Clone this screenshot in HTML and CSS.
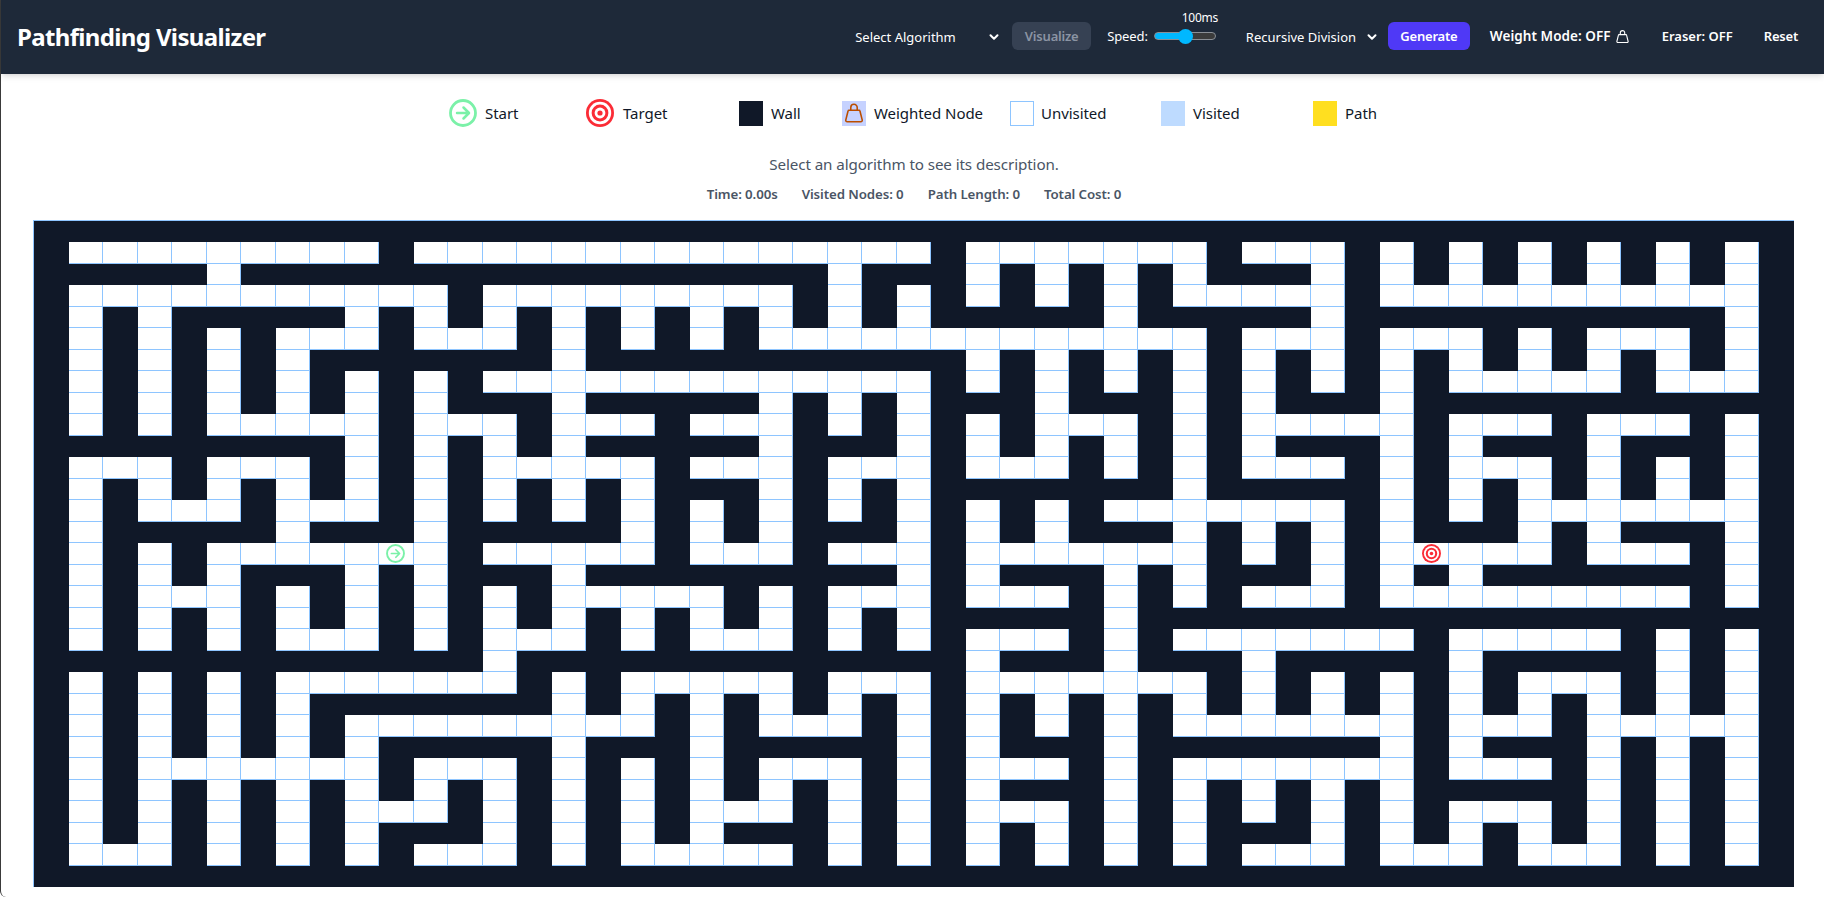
FILE: index.html
```html
<!DOCTYPE html>
<html lang="en">
<head>
<meta charset="utf-8">
<title>Pathfinding Visualizer</title>
<link rel="stylesheet" href="styles.css">
</head>
<body>
<div class="app">
  <header class="topbar">
    <h1 class="title">Pathfinding Visualizer</h1>
    <nav class="controls">
      <div class="select select-algo"><span>Select Algorithm</span>
        <svg class="chev" viewBox="0 0 12 12"><path d="M2.5 4.2 6 7.8l3.5-3.6"/></svg></div>
      <button class="btn btn-disabled">Visualize</button>
      <div class="speed">
        <span class="speed-label">Speed:</span>
        <div class="speed-slider">
          <span class="speed-value">100ms</span>
          <input class="range" type="range" min="0" max="200" value="104">
        </div>
      </div>
      <div class="select select-maze"><span>Recursive Division</span>
        <svg class="chev" viewBox="0 0 12 12"><path d="M2.5 4.2 6 7.8l3.5-3.6"/></svg></div>
      <button class="btn btn-primary">Generate</button>
      <button class="link link-weight">Weight Mode: OFF
        <svg class="weight-mini" viewBox="0 0 24 24"><path d="M8.500 9V6a3.500 3.500 0 0 1 7 0v3"/><path d="M6.500 9h11a1 1 0 0 1 1 .8l2.500 10a1.500 1.500 0 0 1-1.500 1.700h-15A1.500 1.500 0 0 1 3 19.800l2.500-10a1 1 0 0 1 1-.8z"/></svg>
      </button>
      <button class="link link-eraser">Eraser: OFF</button>
      <button class="link link-reset">Reset</button>
    </nav>
  </header>

  <main class="content">
    <ul class="legend">
      <li class="legend-item">
        <svg class="node-icon" viewBox="0 0 28 28"><circle class="start-ring" cx="14" cy="14" r="12.500"/><path class="start-arrow" d="M8 14h11.500M14.500 8.500 20 14l-5.500 5.500"/></svg>
        <span>Start</span></li>
      <li class="legend-item">
        <svg class="node-icon node-icon-target" viewBox="0 0 28 28"><circle class="t-red" cx="14" cy="14" r="14"/><circle class="t-white" cx="14" cy="14" r="11.200"/><circle class="t-red" cx="14" cy="14" r="8.400"/><circle class="t-white" cx="14" cy="14" r="5.400"/><circle class="t-red" cx="14" cy="14" r="2.600"/></svg>
        <span>Target</span></li>
      <li class="legend-item"><i class="swatch swatch-wall"></i><span>Wall</span></li>
      <li class="legend-item"><i class="swatch swatch-weight">
        <svg class="weight-icon" viewBox="0 0 24 24"><path d="M8.500 9V6a3.500 3.500 0 0 1 7 0v3"/><path d="M6.500 9h11a1 1 0 0 1 1 .8l2.500 10a1.500 1.500 0 0 1-1.500 1.700h-15A1.500 1.500 0 0 1 3 19.800l2.500-10a1 1 0 0 1 1-.8z"/></svg></i><span>Weighted Node</span></li>
      <li class="legend-item"><i class="swatch swatch-unvisited"></i><span>Unvisited</span></li>
      <li class="legend-item"><i class="swatch swatch-visited"></i><span>Visited</span></li>
      <li class="legend-item"><i class="swatch swatch-path"></i><span>Path</span></li>
    </ul>

    <p class="description">Select an algorithm to see its description.</p>

    <div class="stats">
      <span>Time: 0.00s</span>
      <span>Visited Nodes: 0</span>
      <span>Path Length: 0</span>
      <span>Total Cost: 0</span>
    </div>

    <div class="grid" id="grid"></div>
  </main>
</div>
<script src="script.js"></script>
</body>
</html>
```
FILE: styles.css
```css
* { box-sizing: border-box; }
html, body { margin: 0; height: 100%; background: #fff; overflow: hidden; }
body { font-family: "Noto Sans", "Open Sans", sans-serif; color: #101828; }
.app { height: 897px; border-left: 1px solid #3a3a3a; border-bottom-left-radius: 6px; }

.topbar {
  height: 74px; background: #1e2939; color: #fff;
  display: flex; align-items: center; justify-content: space-between;
  padding: 0 26px 2px 16px;
  box-shadow: 0 4px 6px -1px rgba(0,0,0,.1), 0 2px 4px -2px rgba(0,0,0,.1);
  position: relative;
}
.title { margin: 0; padding-top: 2px; font-size: 24px; font-weight: 700; letter-spacing: -.65px; line-height: 32px; }
.controls { display: flex; align-items: center; font-size: 13px; }

.select { display: flex; align-items: center; justify-content: space-between; color: #fff; padding-top: 2px; }
.select-algo { width: 146px; margin-right: 11px; }
.select-maze { width: 133px; margin-right: 9px; }
.chev { width: 12px; height: 12px; margin-right: 1px; fill: none; stroke: #fff; stroke-width: 2; stroke-linecap: round; stroke-linejoin: round; }

.btn { height: 28px; border: 0; border-radius: 6px; font: inherit; font-weight: 600; padding: 0; letter-spacing: -.2px; }
.btn-disabled { width: 79px; background: #364153; color: #8b94a3; margin-right: 16px; }
.btn-primary { width: 82px; background: #4f39f6; color: #fff; margin-right: 20px; }

.speed { display: flex; align-items: center; margin-right: 30px; }
.speed-label { margin-right: 6px; letter-spacing: -.1px; }
.speed-slider { position: relative; width: 62px; height: 16px; display: flex; align-items: center; }
.speed-value { position: absolute; right: -2px; top: -18px; font-size: 12px; line-height: 16px; white-space: nowrap; letter-spacing: -.3px; }
.range {
  -webkit-appearance: none; appearance: none; display: block;
  width: 62px; height: 8px; margin: 0; border-radius: 4px;
  border: 1px solid #8a8f96;
  background: linear-gradient(to right, #00b8ff 52%, #3b3b3b 52%);
}
.range::-webkit-slider-thumb {
  -webkit-appearance: none; appearance: none;
  width: 15px; height: 15px; border-radius: 50%; background: #00b8ff; border: 0;
}

.link { background: none; border: 0; padding: 0; color: #fff; font: inherit; font-weight: 600; display: flex; align-items: center; white-space: nowrap; }
.link-weight { margin-right: 32px; font-size: 13.500px; letter-spacing: .05px; }
.link-eraser { margin-right: 31px; }
.link-reset { letter-spacing: -.2px; }
.weight-mini { width: 15px; height: 15px; margin-left: 4px; fill: none; stroke: #fff; stroke-width: 1.800; }

.content { display: flex; flex-direction: column; padding: 0 29px 0 32px; }

.legend {
  list-style: none; margin: 25px 0 0; padding: 0 0 0 416px; height: 26px;
  display: grid; grid-template-columns: 137px 153px 103px 168px 151px 152px 80px;
  align-items: center; font-size: 15px; letter-spacing: -.05px;
}
.legend-item { display: flex; align-items: center; white-space: nowrap; }
.node-icon { width: 28px; height: 28px; flex: none; margin-right: 8px; }
.node-icon-target { margin-right: 9px; }
.start-ring { fill: none; stroke: #7bf1a8; stroke-width: 2.800; }
.start-arrow { fill: none; stroke: #7bf1a8; stroke-width: 2.500; stroke-linecap: round; stroke-linejoin: round; }
.t-red { fill: #fb2c36; }
.t-white { fill: #fff; }

.swatch { width: 24px; height: 25px; flex: none; margin-right: 8px; display: flex; align-items: center; justify-content: center; }
.swatch-wall { background: #101828; }
.swatch-weight { background: #c6d2ff; }
.swatch-unvisited { background: #fff; border: 1px solid #8ec5ff; margin-right: 7px; }
.swatch-visited { background: #bedbff; }
.swatch-path { background: #ffdf20; }
.weight-icon { width: 22px; height: 22px; fill: none; stroke: #bb4d00; stroke-width: 1.700; }

.description { margin: 27px 0 0; text-align: center; font-size: 15.200px; line-height: 24px; color: #4a5565; letter-spacing: -.1px; }

.stats { display: flex; justify-content: center; gap: 24px; margin-top: 8px; height: 20px; font-size: 13.300px; line-height: 20px; font-weight: 600; color: #4a5565; letter-spacing: -.1px; }

.grid {
  margin-top: 16px; width: 1761px; height: 667px;
  display: grid; grid-template-columns: repeat(51, 1fr); grid-template-rows: repeat(31, 1fr);
  border-top: 1px solid #8ec5ff; border-left: 1px solid #8ec5ff;
}
.cell { background: #fff; border-right: 1px solid #8ec5ff; border-bottom: 1px solid #8ec5ff; display: flex; align-items: center; justify-content: center; min-width: 0; min-height: 0; }
.cell.wall { background: #101828; border-color: #101828; }
.cell-icon { width: 19px; height: 19px; display: block; }
```
FILE: script.js
```js
// Open cells per row, as column ranges; everything else is a wall.
var OPEN = [
  "",
  "1-9 11-25 27-33 35-37 39 41 43 45 47 49",
  "5 23 27 29 31 33 37 39 41 43 45 47 49",
  "1-11 13-21 23 25 27 29 31 33-37 39-49",
  "1 3 9 11 13 15 17 19 21 23 25 31 37 49",
  "1 3 5 7-9 11-13 15 17 19 21-33 35-37 39-41 43 45-47 49",
  "1 3 5 7 15 27 29 31 33 35 37 39 41 43 45 47 49",
  "1 3 5 7 9 11 13-25 27 29 31 33 35 37 39 41-45 47-49",
  "1 3 5 7 9 11 15 21 23 25 29 33 35 39",
  "1 3 5-9 11-13 15-17 19-21 23 25 27 29-31 33 35-39 41-43 45-47 49",
  "9 11 13 15 21 25 27 29 31 33 35 39 41 45 49",
  "1-3 5-7 9 11 13-17 19-21 23-25 27-29 31 33 35-37 39 41-43 45 47 49",
  "1 3 5 7 9 11 13 15 17 21 23 25 33 39 41 43 45 47 49",
  "1 3-5 7-9 11 13 15 17 19 21 23 25 27 29 31-37 39 41 43-49",
  "1 7 11 17 19 21 25 27 29 33 35 37 39 43 45 49",
  "1 3 5-11 13-17 19-21 23-25 27-33 35 37 39-43 45-47 49",
  "1 3 5 9 11 15 25 27 31 33 37 39 41 49",
  "1 3-5 7 9 11 13 15-19 21 23-25 27-29 31 33 35-37 39-47 49",
  "1 3 5 7 9 11 13 15 17 19 21 23 25 31",
  "1 3 5 7-9 11 13-15 17 19-21 23 25 27-29 31 33-39 41-45 47 49",
  "13 27 31 35 41 47 49",
  "1 3 5 7-13 15 17-21 23-25 27-33 35 37 39 41 43-45 47 49",
  "1 3 5 7 15 17 19 21 23 25 27 29 31 33 35 37 39 41 43 45 47 49",
  "1 3 5 7 9-17 19 21-23 25 27 29 31 33-39 41-43 45-49",
  "1 3 5 7 9 15 19 25 27 31 39 41 45 47 49",
  "1 3-9 11-13 15 17 19 21-23 25 27-29 31 33-39 41-43 45 47 49",
  "1 3 5 7 9 11 13 15 17 19 21 23 25 27 31 33 35 37 39 45 47 49",
  "1 3 5 7 9-11 13 15 17 19-21 23 25 27-29 31 33 35 37 39 41-43 45 47 49",
  "1 3 5 7 9 13 15 17 19 23 25 27 29 31 33 37 39 41 43 45 47 49",
  "1-3 5 7 9 11-13 15 17-21 23 25 27 29 31 33 35-37 39-41 43-45 47 49",
  ""
];
var COLS = 51;
var START = "15:10", TARGET = "15:40";
var START_SVG = '<svg class="cell-icon" viewBox="0 0 28 28"><circle class="start-ring" cx="14" cy="14" r="12.500"/><path class="start-arrow" d="M8 14h11.500M14.500 8.500 20 14l-5.500 5.500"/></svg>';
var TARGET_SVG = '<svg class="cell-icon" viewBox="0 0 28 28"><circle class="t-red" cx="14" cy="14" r="14"/><circle class="t-white" cx="14" cy="14" r="11.200"/><circle class="t-red" cx="14" cy="14" r="8.400"/><circle class="t-white" cx="14" cy="14" r="5.400"/><circle class="t-red" cx="14" cy="14" r="2.600"/></svg>';

var grid = document.getElementById("grid");
OPEN.forEach(function (spec, r) {
  var open = {};
  spec.split(" ").forEach(function (part) {
    if (!part) return;
    var b = part.split("-"), from = +b[0], to = +(b[1] || b[0]);
    for (var c = from; c <= to; c++) open[c] = true;
  });
  for (var c = 0; c < COLS; c++) {
    var cell = document.createElement("div");
    cell.className = open[c] ? "cell" : "cell wall";
    var key = r + ":" + c;
    if (key === START) cell.innerHTML = START_SVG;
    if (key === TARGET) cell.innerHTML = TARGET_SVG;
    grid.appendChild(cell);
  }
});
```
